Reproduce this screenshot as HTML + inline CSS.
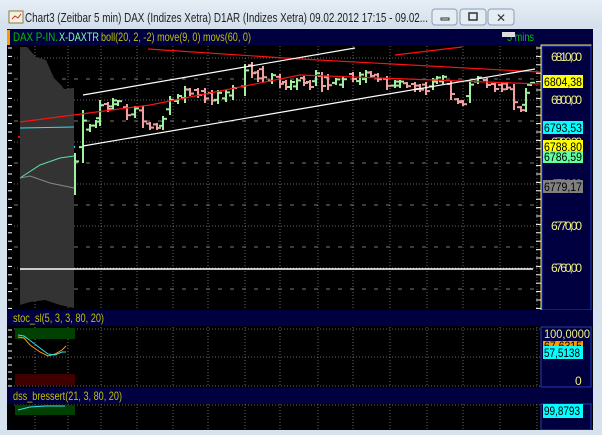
<!DOCTYPE html>
<html><head><meta charset="utf-8"><style>
body{margin:0;width:602px;height:430px;overflow:hidden;background:#d6e2ee;font-family:"Liberation Sans",sans-serif}
</style></head><body>
<svg width="602" height="430" xmlns="http://www.w3.org/2000/svg" font-family="Liberation Sans, sans-serif">
<defs><linearGradient id="tb" x1="0" y1="0" x2="0" y2="1"><stop offset="0" stop-color="#e6eef6"/><stop offset="1" stop-color="#d3dfeb"/></linearGradient></defs>
<rect width="602" height="430" fill="#d6e2ee"/>
<rect width="602" height="28" fill="url(#tb)"/>
<rect x="9" y="11" width="14" height="12" fill="#f4f0e0" stroke="#8a7a40"/>
<path d="M12 19 l3 -3 l3 2 l3 -4" stroke="#c03030" fill="none"/>
<text x="25" y="22" font-size="12.5" fill="#222" textLength="403" lengthAdjust="spacingAndGlyphs">Chart3 (Zeitbar 5 min)  DAX (Indizes Xetra) D1AR (Indizes Xetra) 09.02.2012 17:15 - 09.02...</text>
<g fill="#e4ecf4" stroke="#8c9cb0"><rect x="432" y="9" width="25" height="16" rx="3"/><rect x="460" y="9" width="26" height="16" rx="3"/><rect x="488" y="9" width="26" height="16" rx="3"/></g>
<rect x="441" y="18" width="8" height="2" fill="none" stroke="#333"/>
<rect x="469" y="13" width="8" height="7" fill="none" stroke="#333" stroke-width="1.5"/>
<text x="496" y="22" font-size="12" fill="#333">✕</text>
<rect x="7" y="29" width="586" height="401" fill="#000"/>
<rect x="7" y="29" width="586" height="16" fill="#000040"/>
<rect x="7" y="30" width="3" height="15" fill="#ff9900"/>
<text x="13" y="41" font-size="12" fill="#00c000" textLength="45" lengthAdjust="spacingAndGlyphs">DAX P-IN.</text>
<text x="59" y="41" font-size="12" fill="#80ffa0" textLength="40" lengthAdjust="spacingAndGlyphs">X-DAXTR</text>
<text x="101" y="41" font-size="12" fill="#c0c000" textLength="150" lengthAdjust="spacingAndGlyphs">boll(20, 2, -2) move(9, 0) movs(60, 0)</text>
<text x="507" y="41" font-size="12" fill="#00c000" textLength="27" lengthAdjust="spacingAndGlyphs">5 mins</text>
<rect x="502" y="32" width="13" height="5" fill="#ddd"/>
<rect x="541" y="45" width="50" height="265" fill="#000040" stroke="#f0e060"/>
<rect x="542" y="46" width="49" height="264" fill="#000040" stroke="#2040c0" stroke-width="1"/>
<g id="grid"></g>
<g id="bars"></g>
<rect x="7" y="310" width="586" height="16" fill="#000040"/>
<text x="13" y="322" font-size="12" fill="#c0c000" textLength="91" lengthAdjust="spacingAndGlyphs">stoc_sl(5, 3, 3, 80, 20)</text>
<rect x="541" y="327" width="50" height="60" fill="#000040" stroke="#2040c0"/>
<rect x="7" y="388" width="586" height="16" fill="#000040"/>
<text x="13" y="400" font-size="12" fill="#c0c000" textLength="109" lengthAdjust="spacingAndGlyphs">dss_bressert(21, 3, 80, 20)</text>
<rect x="541" y="404" width="50" height="26" fill="#000040" stroke="#2040c0"/>
<rect x="593" y="29" width="9" height="401" fill="#d6e2ee"/>
<rect x="0" y="29" width="7" height="401" fill="#d6e2ee"/>
<path d="M20 47 L27 47 L36 57 L46 60 L54 78 L61 85 L64 89 L74 88 L74 308 L60 305 L45 300 L30 302 L20 305 Z" fill="#333"/>
<polyline points="20,122 150,105 300,75 540,84" fill="none" stroke="#ff1010" stroke-width="1.2"/>
<polyline points="148,49 300,59 540,72" fill="none" stroke="#ff1010" stroke-width="1.2"/>
<polyline points="395,55 462,47" fill="none" stroke="#ff1010" stroke-width="1.2"/>
<polyline points="83,95 355,48" fill="none" stroke="#fff" stroke-width="1.2"/>
<polyline points="83,146 300,109 535,69" fill="none" stroke="#fff" stroke-width="1.2"/>
<line x1="20" y1="269" x2="533" y2="269" stroke="#fff" stroke-width="1.5"/>
<line x1="20" y1="128" x2="74" y2="127" stroke="#30e0f0"/>
<polyline points="20,178 40,165 60,158 74,156" fill="none" stroke="#60e0a0"/>
<polyline points="20,178 30,176 50,183 74,188" fill="none" stroke="#888"/>
<g font-size="12" fill="#f0f080" lengthAdjust="spacingAndGlyphs">
<text x="551" y="61" textLength="31">6810,00</text><text x="551" y="104" textLength="31">6800,00</text><text x="551" y="146" textLength="31">6790,00</text>
<text x="551" y="188" textLength="31">6780,00</text><text x="551" y="230" textLength="31">6770,00</text><text x="551" y="272" textLength="31">6760,00</text>
</g>
<g font-size="12" fill="#000">
<rect x="543" y="75" width="40" height="13" fill="#ffff00"/><text x="544" y="86" textLength="38" lengthAdjust="spacingAndGlyphs">6804,38</text>
<rect x="543" y="121" width="40" height="13" fill="#00ffff"/><text x="544" y="132" textLength="38" lengthAdjust="spacingAndGlyphs">6793,53</text>
<rect x="543" y="140" width="40" height="12" fill="#ffff00"/><text x="544" y="151" textLength="38" lengthAdjust="spacingAndGlyphs">6788,80</text>
<rect x="543" y="151" width="40" height="12" fill="#60ffa0"/><text x="544" y="161" textLength="38" lengthAdjust="spacingAndGlyphs">6786,59</text>
<rect x="543" y="180" width="40" height="13" fill="#808080"/><text x="544" y="191" textLength="38" lengthAdjust="spacingAndGlyphs">6779,17</text>
</g>
<rect x="15" y="328" width="60" height="11" fill="#004000"/>
<rect x="15" y="374" width="60" height="11" fill="#400000"/>
<polyline points="18,337 24,338 30,345 40,352 48,356 55,354 62,350 66,346" fill="none" stroke="#ff9900"/>
<polyline points="18,335 24,336 32,342 40,348 48,354 55,355 62,352 66,352" fill="none" stroke="#30e0f0"/>
<g font-size="12" fill="#f0f080"><text x="544" y="338" textLength="46" lengthAdjust="spacingAndGlyphs">100,0000</text><text x="575" y="385">0</text></g>
<rect x="543" y="341" width="40" height="10" fill="#ff9900"/><text x="544" y="350" font-size="12" fill="#000" textLength="38" lengthAdjust="spacingAndGlyphs">67,6315</text>
<rect x="543" y="346" width="40" height="13" fill="#00ffff"/><text x="544" y="357" font-size="12" fill="#000" textLength="36" lengthAdjust="spacingAndGlyphs">57,5138</text>
<rect x="15" y="405" width="60" height="10" fill="#004000"/>
<polyline points="18,410 30,407 45,406 65,406" fill="none" stroke="#30e0f0"/>
<rect x="543" y="404" width="40" height="14" fill="#00ffff"/><text x="544" y="415" font-size="12" fill="#000" textLength="36" lengthAdjust="spacingAndGlyphs">99,8793</text>
</svg>
<script>
var ns="http://www.w3.org/2000/svg";
function el(p,t,a){var e=document.createElementNS(ns,t);for(var k in a)e.setAttribute(k,a[k]);p.appendChild(e);return e;}
var g=document.getElementById("grid");
var vx=[35,68,101,137,173,208,245,280,318,353,390,427,463,500,537];
[[46,310],[327,387],[404,430]].forEach(function(r){vx.forEach(function(x){el(g,"line",{x1:x,y1:r[0],x2:x,y2:r[1],stroke:"#666","stroke-dasharray":"1,2"});});});
[58,100,142,184,226,268,329,357,386,405].forEach(function(y){el(g,"line",{x1:14,y1:y,x2:540,y2:y,stroke:"#666","stroke-dasharray":"1,2"});});
[79,121,163,205,247,289].forEach(function(y){el(g,"line",{x1:14,y1:y,x2:540,y2:y,stroke:"#777","stroke-dasharray":"4,8"});});
for(var y=48;y<310;y+=8.4){el(g,"line",{x1:8,y1:y,x2:12,y2:y,stroke:"#fff"});el(g,"line",{x1:536,y1:y,x2:541,y2:y,stroke:"#fff"});}
for(var y=330;y<387;y+=7){el(g,"line",{x1:8,y1:y,x2:12,y2:y,stroke:"#fff"});}
var b=document.getElementById("bars");
var G="#a0f0a0",P="#f0a0a0";
var d=[[75,153,195,G],[83,110,163,G],[90,124,132,G],[96,120,128,G],[100,100,126,G],[108,102,112,P],[113,98,110,G],[118,100,106,G],[127,104,120,P],[135,106,118,G],[143,106,128,P],[150,122,130,P],[157,123,130,P],[163,116,130,G],[170,96,115,G],[178,94,104,G],[185,86,103,G],[190,88,96,P],[198,88,98,P],[205,88,103,P],[212,90,105,P],[218,90,104,G],[226,90,102,G],[233,85,100,G],[245,64,96,G],[252,62,78,P],[258,70,82,P],[263,66,82,P],[272,73,84,G],[280,74,88,P],[286,80,90,P],[291,80,90,G],[297,78,90,G],[304,76,86,P],[310,80,90,P],[316,70,86,G],[322,72,92,P],[328,74,90,P],[336,78,85,G],[343,77,88,G],[353,72,82,P],[360,72,85,G],[366,70,83,G],[371,71,78,P],[378,73,82,P],[387,76,90,P],[395,80,88,G],[400,80,88,G],[407,82,88,P],[415,82,92,P],[420,84,92,P],[426,82,95,P],[433,78,90,G],[437,76,84,G],[443,75,84,G],[451,80,100,P],[458,98,104,P],[463,100,106,P],[470,80,103,G],[478,76,84,G],[487,78,88,P],[495,82,92,P],[502,83,92,P],[507,82,90,P],[514,84,110,P],[521,106,112,P],[526,88,112,G],[531,82,86,G],
[22,130,165,"#f00"],[28,145,160,"#f00"],[34,140,175,"#0c0"],[40,150,165,"#0c0"],[48,148,168,"#f00"],[55,150,156,"#f00"],[61,147,156,"#0c0"],[66,146,150,"#30e0f0"],[71,146,150,"#30e0f0"]];
d.forEach(function(a){var x=a[0],c=a[3];el(b,"line",{x1:x,y1:a[1],x2:x,y2:a[2],stroke:c,"stroke-width":2});
var o=a[1]+(a[2]-a[1])*0.7,cl=a[1]+(a[2]-a[1])*0.2;if(c==P||c=="#f00"){var t=o;o=cl;cl=t;}
el(b,"line",{x1:x-4,y1:o,x2:x,y2:o,stroke:c,"stroke-width":2});el(b,"line",{x1:x,y1:cl,x2:x+4,y2:cl,stroke:c,"stroke-width":2});});
</script>
</body></html>
